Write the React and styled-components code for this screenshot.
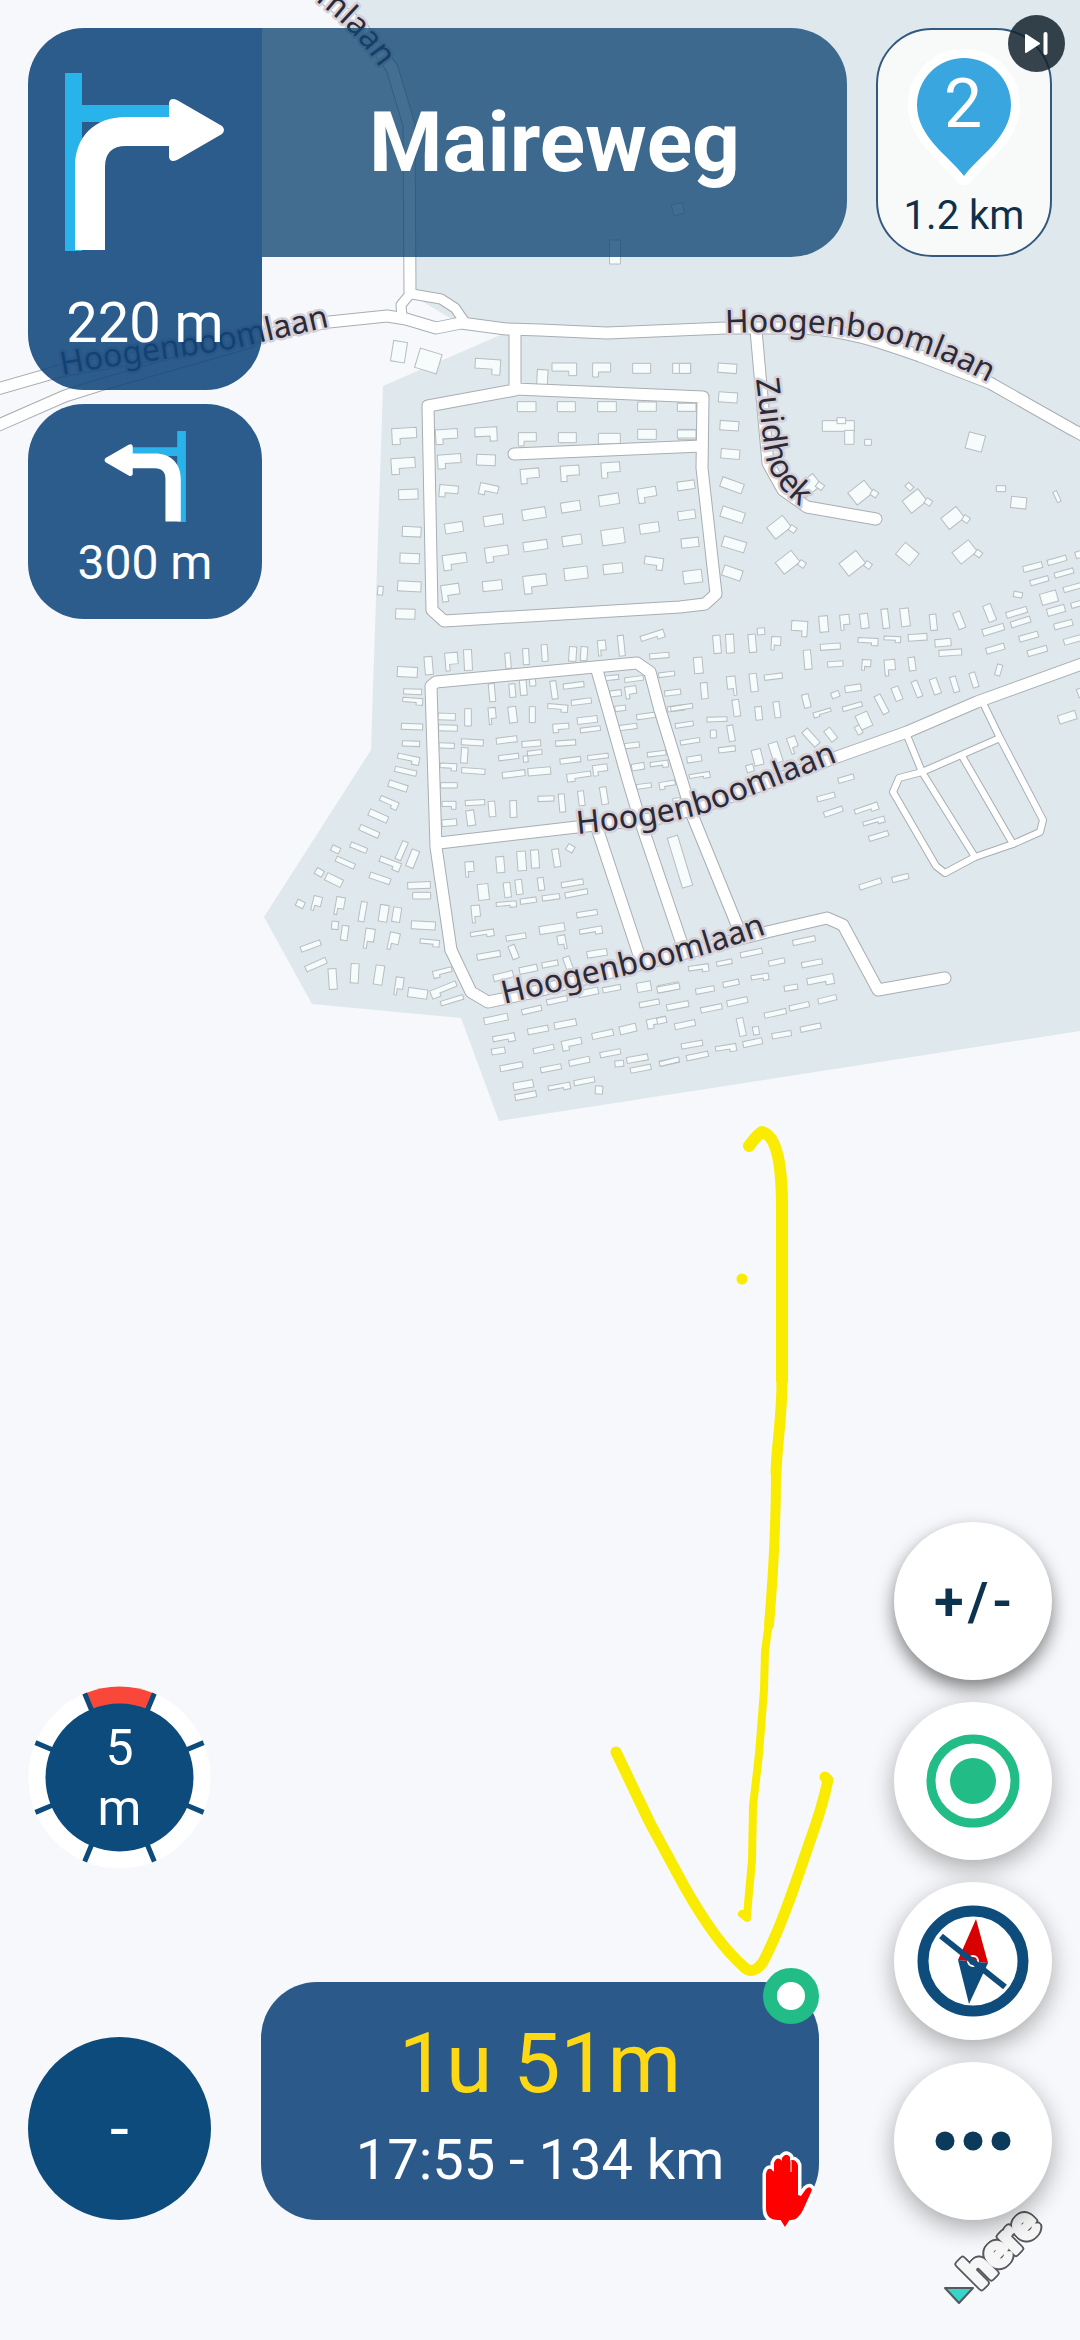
import React from 'react';
import styled, { createGlobalStyle, css } from 'styled-components';

// Building footprints per map tile: [centerX, centerY, width, height, angle, leg]
// Tile units are a third of a map pixel. leg: -1 / 1 adds a corner on the left / right.
const TILE_UNITS = 3;

const tiles = [
  {
    x: 260,
    y: 330,
    buildings: [
      [417, 65, 42, 62, 9], [505, 93, 68, 60, 17], [683, 110, 76, 46, 4, 1],
      [913, 118, 74, 38, 0, 1], [1025, 120, 54, 42, 0, -1], [1145, 115, 54, 30, 0], [1265, 115, 54, 30, 0],
      [847, 142, 32, 46, 3], [800, 230, 56, 30, 0], [919, 230, 54, 30, 0], [1041, 230, 56, 30, 0], [1161, 230, 56, 28, 0], [1281, 230, 54, 28, 0],
      [433, 318, 74, 48, -3, -1], [560, 320, 66, 44, -4, -1], [678, 313, 66, 42, -3, 1],
      [802, 328, 54, 40, 0, -1], [922, 323, 54, 30, 0], [1048, 326, 66, 32, 0], [1161, 313, 56, 30, 0], [1281, 313, 54, 30, 0],
      [430, 408, 72, 48, -4, -1], [568, 394, 70, 42, -4, -1], [678, 390, 56, 32, 2],
      [445, 493, 58, 30, -2], [566, 484, 56, 36, 5, -1], [686, 480, 56, 34, 12, -1],
      [810, 438, 56, 44, -5, -1], [930, 430, 56, 46, -4, -1], [1052, 420, 56, 46, -4, -1],
      [455, 605, 56, 30, 3], [582, 593, 54, 30, -9], [700, 571, 58, 30, -9], [822, 551, 70, 32, -9], [932, 530, 58, 30, -9], [1047, 509, 60, 32, -9], [1162, 495, 56, 44, -9, -1],
      [449, 685, 58, 30, 2], [585, 695, 72, 46, -8, -1], [711, 672, 70, 44, -8, -1], [826, 647, 72, 28, -8], [936, 631, 58, 30, -8], [1059, 620, 68, 46, -8], [1168, 594, 58, 30, -8],
      [361, 782, 16, 26, 5], [448, 769, 70, 30, 3], [572, 788, 54, 50, -8, -1], [697, 767, 58, 30, -6], [826, 762, 70, 54, -7, -1], [948, 730, 70, 36, -7], [1059, 716, 58, 30, -6], [1181, 700, 56, 36, 8, 1],
      [436, 852, 58, 30, 2], [1178, 920, 72, 24, -18, 1],
    ],
  },
  {
    x: 680,
    y: 330,
    buildings: [
      [15, 115, 34, 30, 0], [142, 115, 56, 28, 4], [144, 202, 56, 30, 4], [148, 287, 56, 28, 4], [151, 372, 56, 28, 5],
      [156, 466, 68, 30, 20], [158, 554, 70, 32, 18], [162, 643, 70, 32, 17], [157, 729, 58, 32, 19],
      [20, 232, 56, 24, 0], [20, 312, 56, 24, 0], [18, 466, 52, 26, -8], [20, 555, 52, 26, -8], [30, 638, 52, 28, -6], [38, 740, 56, 38, -7],
      [475, 288, 96, 32, 0], [508, 322, 28, 42, 0], [484, 272, 26, 18, 0], [564, 337, 20, 18, 0], [886, 336, 50, 50, 15], [317, 428, 20, 20, 0],
      [387, 467, 62, 44, -38], [420, 468, 22, 18, 35], [542, 488, 62, 46, -38], [583, 491, 20, 18, 35],
      [688, 470, 22, 16, 45], [704, 513, 60, 46, -38], [745, 516, 20, 18, 35], [818, 564, 58, 42, -38], [858, 567, 20, 18, 35],
      [297, 592, 60, 44, -38], [338, 597, 20, 18, 35], [323, 697, 60, 44, -38], [366, 702, 20, 18, 35],
      [517, 700, 64, 48, -38], [564, 705, 20, 18, 35], [682, 672, 54, 46, 40], [854, 666, 62, 44, -38], [895, 671, 20, 18, 35],
      [963, 476, 28, 18, 0], [1016, 518, 46, 34, 6], [1131, 500, 12, 34, -25],
      [1058, 711, 58, 18, -15], [1131, 691, 58, 16, -16], [1210, 670, 48, 20, -16], [1078, 752, 56, 16, -16], [1152, 729, 58, 16, -16], [1180, 772, 60, 16, -16],
      [1014, 794, 26, 16, 12], [1107, 803, 50, 34, -16], [1128, 841, 54, 22, -16], [1200, 820, 54, 16, -16],
      [1010, 847, 64, 18, -17], [1022, 876, 60, 18, -17], [1150, 884, 56, 18, -15], [940, 899, 66, 20, -17], [1046, 920, 58, 18, -16], [1184, 928, 66, 18, -16],
      [946, 956, 56, 18, -16], [1072, 963, 60, 18, -16], [929, 849, 24, 52, -22], [838, 871, 22, 52, -22],
      [760, 877, 20, 48, -6], [675, 862, 26, 54, -7], [616, 866, 20, 58, -7], [553, 873, 24, 44, -7], [495, 877, 28, 46, -6, -1], [431, 882, 26, 48, -5],
      [358, 896, 48, 46, 4, 1], [243, 904, 22, 20, -5], [111, 943, 22, 54, -5], [150, 941, 24, 56, -3], [217, 940, 22, 54, -5], [288, 940, 28, 40, 3, -1],
      [451, 950, 60, 18, -4], [564, 935, 60, 22, 3, 1], [637, 928, 50, 18, 3, 1], [713, 922, 56, 20, -4], [789, 938, 48, 22, -5], [811, 968, 68, 18, -4],
    ],
  },
  {
    x: 260,
    y: 620,
    buildings: [
      [442, 156, 60, 30, 3], [506, 137, 24, 54, -5], [575, 125, 38, 54, -5, -1], [624, 120, 24, 62, -3], [744, 122, 16, 46, -5], [798, 110, 18, 48, -3], [854, 99, 18, 50, -4],
      [938, 102, 22, 44, 4], [972, 101, 20, 42, 4], [1026, 84, 24, 46, -5, -1], [1084, 77, 18, 62, -6], [1198, 107, 58, 16, -5],
      [458, 215, 54, 16, 2], [458, 244, 60, 20, 4, 1], [456, 320, 64, 18, 2], [453, 371, 52, 16, 2], [445, 418, 66, 24, 12, 1], [437, 454, 66, 16, 13],
      [414, 498, 58, 20, 18], [386, 549, 58, 24, 23, 1], [355, 588, 60, 20, 24], [328, 634, 62, 18, 24], [296, 683, 52, 16, 22], [227, 688, 26, 18, 25],
      [256, 728, 60, 16, 24], [178, 757, 24, 20, 30], [222, 780, 52, 24, 26], [121, 852, 24, 20, 25], [170, 851, 26, 44, 14, -1], [239, 858, 26, 54, 10, -1], [308, 875, 18, 60, 10],
      [371, 880, 26, 50, 9], [410, 884, 24, 44, 9], [425, 692, 18, 58, 24], [458, 716, 24, 54, 22], [389, 732, 66, 26, 21, 1], [360, 775, 64, 18, 19],
      [477, 796, 68, 20, -2], [485, 827, 54, 20, 0], [225, 916, 20, 24, 6], [254, 939, 20, 44, 8], [328, 956, 28, 60, 8, -1], [401, 964, 30, 52, 12, -1],
      [490, 916, 72, 24, 3], [509, 969, 58, 20, 5, 1], [152, 978, 62, 16, -20], [168, 1034, 66, 18, -24], [218, 1077, 24, 62, -4], [284, 1060, 24, 58, 3], [357, 1065, 26, 58, 9],
      [417, 1099, 24, 54, 8, -1], [473, 1120, 58, 28, 8], [548, 1058, 58, 22, -14, -1], [552, 1110, 82, 26, -22, -1], [576, 1141, 70, 14, -17],
      [696, 218, 18, 54, -5], [757, 212, 18, 40, -5], [790, 203, 20, 46, -5], [818, 187, 18, 22, -5], [882, 210, 18, 54, -8], [941, 196, 62, 16, -7],
      [560, 290, 52, 20, 2], [624, 292, 20, 52, 0], [697, 288, 22, 50, -5, -1], [758, 284, 24, 48, -7], [817, 284, 18, 48, 0], [893, 264, 60, 22, 5, 1], [964, 245, 60, 16, -7],
      [564, 324, 56, 18, 1], [903, 324, 48, 26, -4, -1], [982, 300, 60, 20, -7], [991, 328, 60, 14, -7], [560, 377, 46, 16, 2], [637, 367, 66, 18, 3], [740, 360, 62, 18, -7], [814, 371, 56, 18, -5], [917, 369, 60, 16, -4],
      [613, 406, 20, 46, 4], [746, 411, 60, 16, -7], [797, 417, 14, 18, -5], [824, 398, 44, 14, -7], [931, 421, 62, 16, -7], [1014, 410, 62, 14, -7],
      [565, 441, 50, 22, 3, 1], [640, 453, 70, 16, 4], [761, 462, 68, 18, -7], [838, 454, 68, 22, -5], [957, 470, 72, 24, -8, -1], [1021, 450, 44, 32, -8, -1],
      [567, 496, 50, 16, 0], [567, 556, 42, 24, 0, 1], [645, 548, 58, 16, -3], [696, 567, 20, 46, -5], [760, 567, 20, 50, -2], [858, 536, 48, 16, -2], [906, 549, 18, 54, -5], [964, 535, 18, 44, -7], [1032, 527, 20, 52, -9],
      [568, 608, 44, 20, -5], [632, 594, 24, 46, -8], [931, 685, 22, 20, 30], [629, 748, 26, 46, -4, -1], [721, 734, 24, 48, -5], [785, 723, 26, 58, -4], [825, 717, 24, 54, -4], [889, 714, 20, 54, -9],
      [670, 816, 32, 48, -6], [742, 810, 20, 44, -7], [777, 801, 20, 44, -7], [843, 792, 18, 38, -8], [937, 790, 66, 16, -10], [739, 854, 60, 18, -5, 1], [805, 842, 48, 16, -8], [873, 832, 52, 16, -8], [949, 820, 68, 16, -11],
      [648, 882, 26, 52, -6, -1], [981, 881, 62, 16, -9], [667, 942, 70, 20, -9, 1], [768, 951, 60, 16, -9], [876, 926, 76, 24, -9], [993, 934, 68, 22, -10, 1], [906, 967, 24, 42, -11, 1],
      [686, 1006, 70, 18, -10], [761, 996, 20, 42, -22], [1011, 1000, 60, 20, -9], [870, 1032, 48, 16, -11], [924, 1030, 20, 40, -20], [730, 1068, 60, 20, -14], [805, 1048, 54, 20, -12],
      [985, 1117, 60, 20, -12], [1055, 1106, 54, 16, -11], [891, 1141, 62, 16, -12], [815, 1170, 60, 16, -13], [708, 1197, 72, 20, -12], [1152, 1100, 42, 28, -10], [1226, 1102, 62, 22, -11], [1168, 1150, 60, 16, -11],
      [834, 1230, 62, 18, -11], [916, 1212, 66, 20, -11], [1028, 1243, 64, 18, -12], [1104, 1227, 50, 24, -14], [1190, 1208, 58, 28, -12, -1], [732, 1256, 66, 24, -11, 1], [715, 1293, 40, 18, -9], [851, 1287, 62, 16, -12], [936, 1273, 60, 30, -12, -1],
      [1051, 1300, 62, 16, -11], [754, 1340, 68, 18, -11], [873, 1345, 62, 16, -11], [958, 1324, 62, 18, -12], [1078, 1331, 26, 18, -5], [1132, 1316, 64, 18, -10], [1142, 1346, 62, 16, -11], [1228, 1325, 58, 16, -12],
      [790, 1395, 60, 22, -10], [797, 1427, 64, 18, -11], [898, 1402, 66, 20, -11, 1], [973, 1384, 62, 16, -11], [1017, 1410, 22, 24, 3],
      [1055, 173, 42, 14, -6], [1122, 177, 56, 14, -7], [1067, 220, 34, 18, -7], [1113, 217, 34, 36, -9, -1], [1220, 163, 48, 14, -7], [1238, 218, 48, 16, -7], [1081, 265, 32, 16, -7], [1158, 288, 56, 16, -8], [1248, 265, 50, 16, -7],
      [1104, 321, 54, 16, -7], [1116, 376, 44, 16, -7], [1190, 401, 56, 14, -7], [1134, 440, 38, 20, -9], [1198, 434, 54, 20, -8, 1], [1152, 498, 44, 14, -7], [1222, 495, 48, 22, -9, -1], [1250, 541, 22, 14, -9],
    ],
  },
  {
    x: 660,
    y: 620,
    buildings: [
      [115, 136, 26, 48, -5], [133, 212, 20, 48, -5], [215, 198, 26, 58, -6, 1], [281, 188, 22, 54, -7], [340, 170, 54, 16, -7], [443, 119, 22, 58, -5], [526, 132, 46, 16, -4], [619, 135, 26, 32, 4, -1], [690, 143, 32, 48, -5, -1], [756, 132, 20, 40, -8],
      [65, 262, 66, 14, -9], [73, 314, 54, 14, -9], [90, 364, 58, 14, -9], [103, 417, 44, 18, -9], [119, 468, 62, 18, -9, 1],
      [229, 264, 20, 50, -8], [296, 280, 20, 40, -6], [351, 269, 18, 48, -8], [171, 298, 60, 14, -2], [160, 342, 18, 24, 0], [213, 340, 18, 48, -10], [201, 388, 50, 16, -7],
      [439, 243, 20, 40, -14], [526, 224, 24, 18, -22], [579, 205, 48, 20, -8], [577, 260, 60, 14, -16], [487, 279, 54, 16, -16, -1], [612, 302, 38, 46, -24], [596, 330, 16, 26, -28],
      [665, 253, 20, 60, -28], [711, 221, 22, 42, -22], [771, 207, 18, 50, -22], [826, 199, 22, 48, -20], [884, 193, 18, 48, -17], [942, 180, 18, 46, -17], [1016, 150, 16, 34, 16],
      [453, 353, 22, 58, -42], [512, 344, 22, 40, -38], [400, 375, 26, 50, -20, -1], [347, 398, 28, 62, -18], [293, 412, 28, 48, -14], [270, 445, 22, 22, -16],
      [1222, 292, 54, 26, -18], [1262, 218, 18, 26, -20], [558, 476, 48, 16, -16], [498, 531, 54, 16, -15], [520, 575, 58, 16, -19], [620, 568, 72, 22, -19, 1], [642, 606, 66, 18, -16, 1], [656, 648, 60, 16, -17],
      [60, 725, 32, 156, -17], [631, 792, 68, 16, -18], [721, 774, 50, 16, -14],
      [432, 962, 68, 16, -12], [274, 999, 66, 16, -12], [193, 1028, 46, 14, -11], [350, 1026, 48, 16, -12], [456, 1030, 62, 16, -11], [116, 1046, 60, 22, -8, 1], [300, 1073, 52, 20, -9, 1],
      [25, 1104, 68, 18, -11], [135, 1110, 56, 16, -11], [213, 1090, 48, 16, -12], [393, 1103, 40, 16, -9], [482, 1083, 80, 30, -11, 1],
      [53, 1157, 66, 18, -11], [154, 1165, 64, 16, -11], [232, 1145, 62, 18, -12], [346, 1180, 66, 16, -12], [418, 1159, 60, 16, -13], [502, 1138, 56, 16, -14],
      [75, 1214, 62, 18, -12], [5, 1201, 28, 18, -12], [244, 1221, 20, 54, -12], [288, 1232, 18, 24, -10], [365, 1244, 58, 16, -10], [452, 1223, 62, 16, -12],
      [96, 1274, 64, 16, -10], [112, 1308, 66, 16, -12], [198, 1286, 62, 22, -9, 1], [278, 1268, 58, 18, -12], [28, 1325, 60, 14, -14],
    ],
  },
];

const northBuildings = [[615, 252, 11, 24, 0], [678, 209, 11, 11, -15]];

const mainRoads = [
  'M316 -8L360 25L392 68L409 125L410 292',
  'M-6 390L60 371L250 338L329 322L387 316L406 319L436 328L461 323L506 329L540 330L607 333L726 328L802 328C850 331 880 342 920 356L990 383L1073 430L1090 439',
  'M-6 427L65 396L100 385L250 342',
  'M515 330V390L428 406L432 610L444 621L680 607L705 604L716 594L702 468L703 397L515 389',
  'M514 454L702 446',
  'M756 330L762 397L768 463L783 490L807 507L876 519',
  'M451 950L436 847L431 686L436 682L637 663L650 672L660 710L693 817L737 925',
  'M451 950L471 992L488 1002L530 993L767 932L827 918L843 925L878 990L945 978',
  'M439 843L577 827L660 818L700 808L837 757L907 732L977 702L1090 661',
  'M597 670L628 780L640 820L684 950',
  'M597 828L640 958',
];

const narrowRoads = [
  'M410 294L401 305L402 318',
  'M412 294L441 299L455 308L464 321',
];

const paths = [
  'M906 733L922 772L975 857',
  'M983 703L1000 738L1043 820L1040 832L1013 844L975 857L945 873L936 866L893 792L899 778L922 772L1000 738',
  'M962 756L1013 844',
];

const roadClasses = [
  { lines: mainRoads, width: 11 },
  { lines: narrowRoads, width: 9 },
  { lines: paths, width: 6 },
];

const streetNames = [
  { id: 'street-north', d: 'M120 -140L306 -6C336 16 360 38 380 68', name: 'Hoogenboomlaan', end: true },
  { id: 'street-west', d: 'M62 375C130 362 200 356 245 346L345 323', name: 'Hoogenboomlaan' },
  { id: 'street-east', d: 'M725 333C790 331 850 331 905 347C940 357 965 370 1020 399', name: 'Hoogenboomlaan' },
  { id: 'street-zuid', d: 'M756 379L764 446C767 475 782 500 840 533', name: 'Zuidhoek' },
  { id: 'street-mid', d: 'M577 834C640 828 690 820 725 806L870 749', name: 'Hoogenboomlaan' },
  { id: 'street-south', d: 'M504 1004L640 972C690 960 730 948 800 922', name: 'Hoogenboomlaan' },
];

const GlobalStyle = createGlobalStyle`
  * {
    box-sizing: border-box;
  }

  body {
    margin: 0;
    background: #f6f8fb;
    font-family: Roboto, 'Liberation Sans', sans-serif;
  }
`;

const buildingPath = ([x, y, w, h, angle, leg]) => {
  const l = -w / 2;
  const t = -h / 2;
  const transform = `translate(${x} ${y}) rotate(${angle})`;
  let d = `M${l} ${t}h${w}v${h}h${-w}z`;
  if (leg) {
    const a = h * 0.64;
    const b = h - a;
    const c = w * 0.32;
    d = leg < 0
      ? `M${l} ${t}h${w}v${a}h${c - w}v${b}h${-c}z`
      : `M${l} ${t}h${w}v${h}h${-c}v${-b}h${c - w}z`;
  }
  return <path key={`${x}-${y}`} d={d} transform={transform} />;
};

const Roads = ({ lines, width, color }) => (
  <RoadLines $color={color} strokeWidth={width}>
    {lines.map(d => <path key={d} d={d} />)}
  </RoadLines>
);

const StreetMap = () => (
  <MapCanvas viewBox="0 0 1080 2340" preserveAspectRatio="xMinYMin slice">
    <path
      fill="#dfe8ec"
      d="M342 0L370 30L398 70L410 120V294L450 318L505 333L383 386L371 750L264 917L312 1004L461 1018L499 1121L1080 1031V0Z"
    />
    <Buildings strokeWidth="1">{northBuildings.map(buildingPath)}</Buildings>
    {tiles.map(tile => (
      <Buildings
        key={`${tile.x}-${tile.y}`}
        strokeWidth={TILE_UNITS}
        transform={`translate(${tile.x} ${tile.y}) scale(${1 / TILE_UNITS})`}
      >
        {tile.buildings.map(buildingPath)}
      </Buildings>
    ))}
    {/* casings first, so crossings stay open */}
    {roadClasses.map(({ lines, width }) => (
      <Roads key={width} lines={lines} width={width + 2} color="#a8aeb2" />
    ))}
    {roadClasses.map(({ lines, width }) => (
      <Roads key={width} lines={lines} width={width} color="#ffffff" />
    ))}
    {streetNames.map(street => (
      <g key={street.id}>
        <path id={street.id} d={street.d} fill="none" />
        <StreetName textAnchor={street.end ? 'end' : 'start'}>
          <textPath href={`#${street.id}`} startOffset={street.end ? '100%' : '0'}>
            {street.name}
          </textPath>
        </StreetName>
      </g>
    ))}
    <LogoMark>
      <text transform="translate(980 2289) rotate(-45)">here</text>
    </LogoMark>
    <path d="M945 2288H973L959 2303Z" fill="#37d5c9" stroke="#55585c" strokeWidth="2" strokeLinejoin="round" />
  </MapCanvas>
);

const TurnIcon = () => (
  <svg viewBox="0 0 160 178" aria-hidden="true">
    <path fill="#28b4ea" d="M0 0H17V32H106V49H17V178H0Z" />
    <path
      fill="#fff"
      d="M10 177V94C10 64 29 44 61 44H104V30Q105 24 112 27L157 53Q161 57 157 61L112 87Q105 90 104 84V73H61C47 73 40 80 40 94V177Z"
    />
  </svg>
);

const PinIcon = () => (
  <svg width="114" height="136" viewBox="0 0 114 136">
    <path
      d="M57 127C42 107 10 88 10 56A47 47 0 0 1 104 56C104 88 72 107 57 127Z"
      fill="#3aa6df"
      stroke="#fff"
      strokeWidth="18"
      strokeLinejoin="round"
      paintOrder="stroke"
    />
    <PinNumber x="56" y="78" textAnchor="middle">2</PinNumber>
  </svg>
);

const SkipIcon = () => (
  <svg width="57" height="57" viewBox="0 0 57 57" aria-hidden="true">
    <path d="M18 20L31 28.5L18 37Z" fill="#fff" stroke="#fff" strokeWidth="2" strokeLinejoin="round" />
    <path d="M37.5 19V38" stroke="#fff" strokeWidth="4" strokeLinecap="round" />
  </svg>
);

const RecenterIcon = () => (
  <svg width="112" height="112" viewBox="-56 -56 112 112" aria-hidden="true">
    <circle r="42" fill="none" stroke="#22bd87" strokeWidth="9" />
    <circle r="23" fill="#22bd87" />
  </svg>
);

const CompassIcon = () => (
  <svg width="112" height="112" viewBox="-56 -56 112 112" aria-hidden="true">
    <circle r="50" fill="none" stroke="#0e4c7c" strokeWidth="11" />
    <path d="M3 -42L15 2L-15 -1Z" fill="#d80000" />
    <path d="M-4 43L15 2L-15 -1Z" fill="#0e4c7c" />
    <circle r="5" fill="none" stroke="#fff" strokeWidth="2" />
    <path d="M-32 -25L32 26" stroke="#0e4c7c" strokeWidth="6" />
  </svg>
);

const MoreIcon = () => (
  <svg width="112" height="112" viewBox="-56 -56 112 112" fill="#0b3a5b" aria-hidden="true">
    <circle cx="-28" r="9.5" />
    <circle r="9.5" />
    <circle cx="28" r="9.5" />
  </svg>
);

const GaugeDial = () => (
  <svg width="183" height="183" viewBox="-91.5 -91.5 183 183" aria-hidden="true">
    <circle r="91" fill="#fff" />
    <path d="M0 0L-34.8 -84.1A91 91 0 0 1 34.8 -84.1Z" fill="#f9483a" />
    {[0, 1, 2, 3, 4, 5, 6, 7].map(i => (
      <path key={i} d="M0 -72V-91" stroke="#0c4b7b" strokeWidth="5" transform={`rotate(${22.5 + i * 45})`} />
    ))}
    <circle r="74" fill="#0c4b7b" />
  </svg>
);

const HandIcon = () => (
  <svg width="54" height="78" viewBox="0 0 54 78" aria-hidden="true">
    <path
      d="M4 58V24Q5 18 9 19L12 22V13Q14 7 18 9L20 11V8Q24 2 28 7V11Q33 8 36 15V45L39 46L44 39Q48 35 50 40L41 60Q36 70 29 70H16Q4 70 4 58Z"
      fill="#ff0000"
      stroke="#fff"
      strokeWidth="7"
      strokeLinejoin="round"
      paintOrder="stroke"
    />
    <path d="M18 69H28L23 77Z" fill="#ff0000" />
    <path d="M29 11V22" stroke="#fff" strokeWidth="1" />
  </svg>
);

const DrawnArrow = () => (
  <InkLayer viewBox="0 0 1080 2340" preserveAspectRatio="xMinYMin slice">
    <path strokeWidth="12" d="M749 1146Q756 1136 762 1132C778 1136 782 1170 782 1209V1380" />
    <path strokeWidth="11" d="M782 1380C782 1420 777 1440 776 1473" />
    <path strokeWidth="10" d="M776 1473C776 1530 772 1590 769 1625" />
    <path strokeWidth="8" d="M770 1615L765 1651L764 1690L759 1754L753 1806L752 1860L748 1904L747 1918L742 1914" />
    <path strokeWidth="11" d="M616 1752L650 1823L683 1884Q716 1943 744 1967Q753 1976 763 1962C780 1930 795 1885 810 1841Q823 1805 828 1780L825 1777" />
    <path strokeWidth="11" d="M742 1279V1279" />
  </InkLayer>
);

const App = () => {
  return (
    <Screen>
      <GlobalStyle />
      <StreetMap />
      <DrawnArrow />

      <TopBar>
        <Maneuvers>
          <NextTurn>
            <TurnIcon />
            <span>220 m</span>
          </NextTurn>
          <FollowingTurn>
            <TurnIcon />
            <span>300 m</span>
          </FollowingTurn>
        </Maneuvers>
        <StreetBanner>Maireweg</StreetBanner>
        <StopCard>
          <PinIcon />
          <span>1.2 km</span>
          <SkipButton type="button" aria-label="Skip stop">
            <SkipIcon />
          </SkipButton>
        </StopCard>
      </TopBar>

      <BottomBar>
        <Gauges>
          <Gauge>
            <GaugeDial />
            <GaugeValue>5<br />m</GaugeValue>
          </Gauge>
          <Speed>-</Speed>
        </Gauges>
        <TripCard>
          <Remaining>1u 51m</Remaining>
          <Arrival>17:55 - 134 km</Arrival>
          <StatusDot />
          <HandBadge>
            <HandIcon />
          </HandBadge>
        </TripCard>
        <Controls>
          <RoundButton type="button" aria-label="Zoom" $raised>
            <span>+</span>
            <span>/</span>
            <span>-</span>
          </RoundButton>
          <RoundButton type="button" aria-label="Recenter"><RecenterIcon /></RoundButton>
          <RoundButton type="button" aria-label="Compass"><CompassIcon /></RoundButton>
          <RoundButton type="button" aria-label="More"><MoreIcon /></RoundButton>
        </Controls>
      </BottomBar>
    </Screen>
  );
};

// Styled Components
const Screen = styled.main`
  position: relative;
  display: flex;
  flex-direction: column;
  justify-content: space-between;
  min-height: 100vh;
  padding: 28px 28px 120px;
  overflow: hidden;
`;

const canvasLayer = css`
  position: absolute;
  inset: 0;
  width: 100%;
  height: 100%;
`;

const MapCanvas = styled.svg`
  ${canvasLayer}
`;

const InkLayer = styled.svg`
  ${canvasLayer}
  fill: none;
  stroke: #f9ec00;
  stroke-linecap: round;
  stroke-linejoin: round;
  pointer-events: none;
`;

const Buildings = styled.g`
  fill: #f6fbfc;
  stroke: #b8bdc0;
`;

const RoadLines = styled.g`
  fill: none;
  stroke: ${props => props.$color};
  stroke-linecap: round;
  stroke-linejoin: round;
`;

const StreetName = styled.text`
  font-family: 'Noto Sans', sans-serif;
  font-size: 32px;
  fill: #2b2a36;
  stroke: #d6d1d9;
  stroke-width: 5px;
  stroke-linejoin: round;
  paint-order: stroke;
`;

const LogoMark = styled.g`
  font-family: Roboto, sans-serif;
  font-size: 44px;
  font-weight: 700;
  fill: #f6f6f7;
  stroke: #f6f6f7;
  stroke-width: 4px;
  stroke-linejoin: round;
  filter: drop-shadow(1px 1px 0 #55585c) drop-shadow(-1px -1px 0 #55585c)
    drop-shadow(1px -1px 0 #55585c) drop-shadow(-1px 1px 0 #55585c);
`;

const PinNumber = styled.text`
  font-family: Roboto, sans-serif;
  font-size: 68px;
  fill: #fff;
`;

const TopBar = styled.header`
  position: relative;
  display: flex;
  align-items: flex-start;
`;

const Maneuvers = styled.div`
  display: flex;
  flex-direction: column;
  gap: 14px;
  width: 234px;
`;

const TurnCard = styled.section`
  display: flex;
  flex-direction: column;
  align-items: center;
  background: rgba(16, 69, 123, 0.88);
  color: #fff;
`;

const NextTurn = styled(TurnCard)`
  gap: 40px;
  padding: 45px 0 35px;
  border-radius: 56px 0 56px 56px;
  font-size: 56px;
  line-height: 64px;

  svg {
    width: 160px;
    height: 178px;
  }
`;

const FollowingTurn = styled(TurnCard)`
  gap: 13px;
  padding: 27px 0 28px;
  border-radius: 56px;
  font-size: 48px;
  line-height: 56px;

  svg {
    width: 82px;
    height: 91px;
    transform: scaleX(-1);
  }
`;

const StreetBanner = styled.h1`
  display: flex;
  flex: 1;
  align-items: center;
  justify-content: center;
  height: 229px;
  margin: 0;
  border-radius: 0 56px 56px 0;
  background: rgba(16, 69, 115, 0.78);
  color: #fff;
  font-size: 84px;
  font-weight: 700;
`;

const StopCard = styled.section`
  position: relative;
  display: flex;
  flex-direction: column;
  align-items: center;
  gap: 7px;
  width: 176px;
  margin-left: 29px;
  padding: 19px 0 15px;
  border: 2px solid #34597f;
  border-radius: 56px;
  background: #f8fafa;
  color: #10304a;
  font-size: 40px;
  line-height: 48px;
`;

const SkipButton = styled.button`
  position: absolute;
  top: -15px;
  right: -15px;
  width: 57px;
  height: 57px;
  padding: 0;
  border: none;
  border-radius: 50%;
  background: rgba(20, 34, 46, 0.85);

  svg {
    display: block;
  }
`;

const BottomBar = styled.footer`
  position: relative;
  display: flex;
  align-items: flex-end;
`;

const Gauges = styled.div`
  display: flex;
  flex-direction: column;
  gap: 168px;
  width: 183px;
`;

const Gauge = styled.div`
  display: grid;
  place-items: center;

  > * {
    grid-area: 1 / 1;
  }
`;

const GaugeValue = styled.div`
  position: relative;
  color: #fff;
  font-size: 50px;
  line-height: 60px;
  text-align: center;
`;

const Speed = styled.div`
  display: grid;
  place-items: center;
  height: 183px;
  border-radius: 50%;
  background: #0c4b7b;
  color: #fff;
  font-size: 68px;
`;

const TripCard = styled.section`
  position: relative;
  display: flex;
  flex: 1;
  flex-direction: column;
  gap: 14px;
  align-items: center;
  margin: 0 75px 0 50px;
  padding: 32px 0 28px;
  border-radius: 56px;
  background: #2b5a8a;
`;

const Remaining = styled.strong`
  color: #ffd814;
  font-size: 84px;
  font-weight: 400;
  line-height: 100px;
`;

const Arrival = styled.span`
  color: #fff;
  font-size: 56px;
  line-height: 64px;
`;

const StatusDot = styled.i`
  position: absolute;
  top: -14px;
  right: 0;
  width: 56px;
  height: 56px;
  border: 14px solid #22bd87;
  border-radius: 50%;
  background: #fff;
`;

const HandBadge = styled.div`
  position: absolute;
  right: 3px;
  bottom: -8px;

  svg {
    display: block;
  }
`;

const Controls = styled.nav`
  display: flex;
  flex-direction: column;
  gap: 22px;
  width: 158px;
`;

const RoundButton = styled.button`
  display: flex;
  align-items: center;
  justify-content: center;
  gap: 4px;
  width: 158px;
  height: 158px;
  padding: 0;
  border: none;
  border-radius: 50%;
  background: #fff;
  box-shadow: ${props => (props.$raised
    ? '0 8px 18px rgba(0, 0, 0, 0.5)'
    : '0 8px 24px rgba(0, 0, 0, 0.32)')};
  color: #0b3350;
  font-family: Roboto, sans-serif;
  font-size: 54px;
  font-weight: 600;
`;

export default App;
